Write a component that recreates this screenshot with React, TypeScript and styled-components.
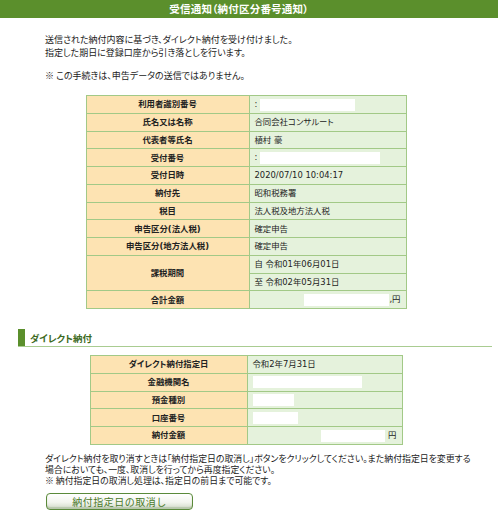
import styled, { createGlobalStyle } from "styled-components";

const GlobalStyle = createGlobalStyle`
  body {
    margin: 0;
    background: #fff;
    font-family: "Noto Sans CJK JP", "Noto Sans", sans-serif;
    font-feature-settings: "palt";
    color: #222;
  }
`;

const Page = styled.div`
  width: 498px;
  height: 520px;
  overflow: hidden;
`;

const TitleBar = styled.div`
  height: 18px;
  background: #5b8f2c;
  color: #fff;
  font-size: 10.5px;
  font-weight: bold;
  line-height: 18px;
  text-align: center;
  padding-right: 20px;
  letter-spacing: 0.2px;
`;

const Main = styled.div`
  width: 492px;
`;

const Message = styled.p<{ $top: number }>`
  margin: ${(p) => p.$top}px 0 0 45px;
  font-size: 9px;
  line-height: 13px;
`;

const Notes = styled.p`
  margin: 8px 0 0 45px;
  font-size: 8.9px;
  line-height: 11px;
`;

const Table = styled.table<{ $label: number; $value: number; $top: number }>`
  border-collapse: collapse;
  margin: ${(p) => p.$top}px auto 0;
  font-family: "DejaVu Sans", "Noto Sans CJK JP", sans-serif;
  font-size: 8.4px;
  td {
    border: 1.6px solid #a2c987;
    height: 16.75px;
    padding: 0 5px;
    line-height: 12px;
  }
  td.label {
    width: ${(p) => p.$label}px;
    background: #fde3b2;
    font-weight: bold;
    text-align: center;
  }
  td.value {
    width: ${(p) => p.$value}px;
    background: #e5f2dc;
  }
  td.right {
    text-align: right;
  }
`;

const Redact = styled.span<{ $w: number }>`
  display: inline-block;
  vertical-align: middle;
  width: ${(p) => p.$w}px;
  height: 12px;
  background: #fff;
`;

const SectionHead = styled.h2`
  margin: 20px 0 0 18px;
  height: 17px;
  border-bottom: 1.5px solid #a9cc91;
  display: flex;
  align-items: center;
  gap: 5px;
  font-size: 9.5px;
  font-weight: bold;
  color: #3d6b1e;
  &::before {
    content: "";
    width: 7px;
    height: 17px;
    background: #5b8f2c;
  }
`;

const CancelButton = styled.button`
  margin: 7px 0 0 46px;
  width: 147px;
  height: 17px;
  border: 1.5px solid #5a8a3a;
  border-radius: 4px;
  background: linear-gradient(#ffffff 0%, #f3f5ef 55%, #cfd8c6 100%);
  box-shadow: inset 0 -2px 1px #b9c7ad;
  color: #4b7a2c;
  font-family: inherit;
  font-size: 10px;
  line-height: 13px;
  padding: 0;
  letter-spacing: 0.5px;
`;

const periodRows = ["自 令和01年06月01日", "至 令和02年05月31日"];

export default function App() {
  return (
    <Page>
      <GlobalStyle />
      <TitleBar>受信通知（納付区分番号通知）</TitleBar>
      <Main>
        <Message $top={15}>
          送信された納付内容に基づき、ダイレクト納付を受け付けました。
          <br />
          指定した期日に登録口座から引き落としを行います。
        </Message>
        <Message $top={10}>※ この手続きは、申告データの送信ではありません。</Message>

        <Table $label={152} $value={146} $top={13}>
          <tbody>
            <tr>
              <td className="label">利用者識別番号</td>
              <td className="value">
                : <Redact $w={95} />
              </td>
            </tr>
            <tr>
              <td className="label">氏名又は名称</td>
              <td className="value">合同会社コンサルート</td>
            </tr>
            <tr>
              <td className="label">代表者等氏名</td>
              <td className="value">植村 豪</td>
            </tr>
            <tr>
              <td className="label">受付番号</td>
              <td className="value">
                : <Redact $w={120} />
              </td>
            </tr>
            <tr>
              <td className="label">受付日時</td>
              <td className="value">2020/07/10 10:04:17</td>
            </tr>
            <tr>
              <td className="label">納付先</td>
              <td className="value">昭和税務署</td>
            </tr>
            <tr>
              <td className="label">税目</td>
              <td className="value">法人税及地方法人税</td>
            </tr>
            <tr>
              <td className="label">申告区分(法人税)</td>
              <td className="value">確定申告</td>
            </tr>
            <tr>
              <td className="label">申告区分(地方法人税)</td>
              <td className="value">確定申告</td>
            </tr>
            <tr>
              <td className="label" rowSpan={2}>
                課税期間
              </td>
              <td className="value">{periodRows[0]}</td>
            </tr>
            <tr>
              <td className="value">{periodRows[1]}</td>
            </tr>
            <tr>
              <td className="label">合計金額</td>
              <td className="value right">
                <Redact $w={85} />
                ,円
              </td>
            </tr>
          </tbody>
        </Table>

        <SectionHead>ダイレクト納付</SectionHead>

        <Table $label={146} $value={144} $top={8}>
          <tbody>
            <tr>
              <td className="label">ダイレクト納付指定日</td>
              <td className="value">令和2年7月31日</td>
            </tr>
            <tr>
              <td className="label">金融機関名</td>
              <td className="value">
                <Redact $w={109} />
              </td>
            </tr>
            <tr>
              <td className="label">預金種別</td>
              <td className="value">
                <Redact $w={41} />
              </td>
            </tr>
            <tr>
              <td className="label">口座番号</td>
              <td className="value">
                <Redact $w={45} />
              </td>
            </tr>
            <tr>
              <td className="label">納付金額</td>
              <td className="value right">
                <Redact $w={64} /> 円
              </td>
            </tr>
          </tbody>
        </Table>

        <Notes>
          ダイレクト納付を取り消すときは「納付指定日の取消し」ボタンをクリックしてください。また納付指定日を変更する
          <br />
          場合においても、一度、取消しを行ってから再度指定ください。
          <br />※ 納付指定日の取消し処理は、指定日の前日まで可能です。
        </Notes>
        <CancelButton>納付指定日の取消し</CancelButton>
      </Main>
    </Page>
  );
}
